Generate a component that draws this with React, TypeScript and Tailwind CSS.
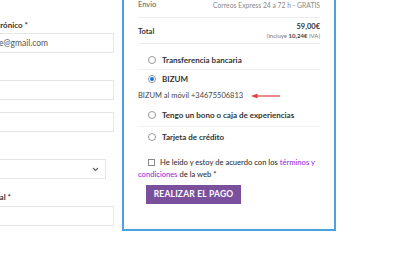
import React from "react";

const Radio = ({ checked = false }: { checked?: boolean }) => (
  <span className="w-[8px] h-[8px] rounded-full border border-[#9a9a9a] bg-white flex items-center justify-center shrink-0">
    {checked && <span className="w-[4px] h-[4px] rounded-full bg-[#1a73e8]" />}
  </span>
);

const Clip = ({ w, children, className = "" }: { w: string; children: React.ReactNode; className?: string }) => (
  <div className={`${w} overflow-hidden flex justify-end whitespace-nowrap ${className}`}>{children}</div>
);

export default function App() {
  return (
    <div className="w-[400px] h-[259px] bg-white overflow-hidden relative text-[#444]" style={{ fontFamily: "Lato, 'Open Sans', sans-serif" }}>
      <div className="flex">
        {/* left form column */}
        <div className="w-[114px] shrink-0 flex flex-col pt-[19px] text-[8px]">
          <div className="h-[14px]">
            <Clip w="w-[28px]" className="font-bold text-[#333]">
              <span>Correo electrónico *</span>
            </Clip>
          </div>
          <div className="h-[20px] border border-l-0 border-[#e6e6e6] flex items-center">
            <Clip w="w-[48px]" className="text-[8.5px] text-[#555]">
              <span>nombre@gmail.com</span>
            </Clip>
          </div>
          <div className="h-[27px]" />
          <div className="h-[20px] border border-l-0 border-[#e6e6e6]" />
          <div className="h-[12px]" />
          <div className="h-[20px] border border-l-0 border-[#e6e6e6]" />
          <div className="h-[27px]" />
          <div className="h-[20px] w-[106px] border border-l-0 border-[#e6e6e6] flex items-center justify-end pr-[6px]">
            <svg width="7" height="5" viewBox="0 0 7 5"><path d="M1 1 L3.5 3.5 L6 1" stroke="#666" strokeWidth="1.2" fill="none" /></svg>
          </div>
          <div className="h-[12px]" />
          <div className="h-[15px]">
            <Clip w="w-[11px]" className="font-bold text-[#333]">
              <span>Código postal *</span>
            </Clip>
          </div>
          <div className="h-[20px] border border-l-0 border-[#e6e6e6]" />
        </div>

        {/* right order panel */}
        <div className="ml-[8px] w-[214px] h-[231px] border-2 border-t-0 border-[#4aa3df] shrink-0 px-[14px] text-[8px]">
          <div className="flex justify-between items-start h-[18px] border-b border-[#ececec] leading-[10px]">
            <span className="text-[#555] text-[7.5px]">Envio</span>
            <span className="text-[#888] text-[6.8px]">Correos Express 24 a 72 h - GRATIS</span>
          </div>
          <div className="flex justify-between items-center h-[26px] border-b border-[#ececec]">
            <span className="font-bold text-[#333] text-[7.5px] pt-[2px]">Total</span>
            <div className="flex flex-col items-end leading-[9px]">
              <span className="font-bold text-[#333] text-[7.5px]">59,00€</span>
              <span className="text-[6px] text-[#777]">(incluye <span className="font-bold text-[#444]">10,24€</span> IVA)</span>
            </div>
          </div>
          <div className="flex items-center gap-[6px] h-[26px] pt-[6px] border-b border-[#f0f0f0] pl-[10px] font-bold text-[#333]">
            <Radio /> <span>Transferencia bancaria</span>
          </div>
          <div className="flex items-center gap-[6px] h-[18px] pl-[10px] font-bold text-[#333]">
            <Radio checked /> <span>BIZUM</span>
          </div>
          <div className="flex items-center h-[15px] text-[#444]">
            <span className="text-[7.5px]">BIZUM al móvil +34675506813</span>
            <svg className="ml-[8px]" width="30" height="8" viewBox="0 0 30 8">
              <path d="M4 4 L29 4" stroke="#e53935" strokeWidth="1.2" />
              <path d="M0 4 L7 1.5 L6 4 L7 6.5 Z" fill="#e53935" />
            </svg>
          </div>
          <div className="flex items-center gap-[6px] h-[24px] border-b border-[#f0f0f0] pl-[10px] font-bold text-[#333]">
            <Radio /> <span>Tengo un bono o caja de experiencias</span>
          </div>
          <div className="flex items-center gap-[6px] h-[19px] pl-[10px] font-bold text-[#333]">
            <Radio /> <span>Tarjeta de crédito</span>
          </div>
          <div className="mt-[10px] leading-[12px] font-medium text-[#333] text-[7.6px]">
            <span className="inline-block w-[7px] h-[7px] border border-[#888] bg-white ml-[10px] mr-[5px] align-[-1px]" />
            He leído y estoy de acuerdo con los <span className="text-[#9b30e0]">términos y condiciones</span> de la web *
          </div>
          <button className="mt-[5px] ml-[8px] w-[95px] h-[19px] bg-[#7a4f9b] text-white font-bold text-[8.5px] tracking-[0.2px]">REALIZAR EL PAGO</button>
        </div>
      </div>
    </div>
  );
}
